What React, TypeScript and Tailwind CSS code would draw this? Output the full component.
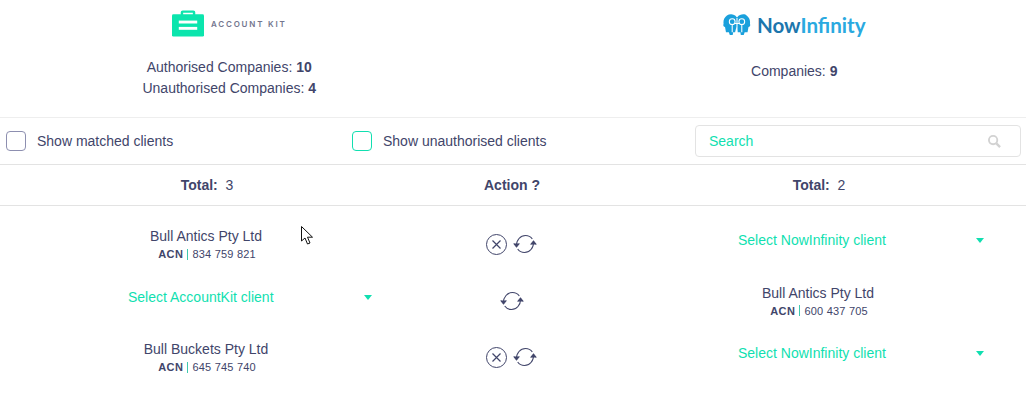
import React, { FC } from "react";

const CloseIcon: FC = () => (
  <svg width="21" height="21" viewBox="0 0 21 21" fill="none" stroke="#41456a" strokeWidth="1">
    <circle cx="10.500" cy="10.500" r="10" />
    <path d="M6.500 6.500l8 8M14.500 6.500l-8 8" strokeWidth="1.200" />
  </svg>
);

const SyncIcon: FC = () => (
  <svg width="24" height="20" viewBox="0 0 24 20" fill="none" stroke="#41456a" strokeWidth="1.100">
    <path d="M3.500 12C3.200 6 7.500 1.500 12.500 1.500c3 0 5.200 1.200 6.800 3.500" />
    <path d="M0.700 9.500l2.800 3.500 2.900-3.500" fill="#41456a" />
    <path d="M20.500 8c.3 6-4 10.500-9 10.500-3 0-5.200-1.200-6.800-3.500" />
    <path d="M23.300 10.500l-2.800-3.500-2.900 3.500" fill="#41456a" />
  </svg>
);

const Caret: FC = () => <span className="w-0 h-0 border-x-[4px] border-x-transparent border-t-[5px] border-t-[#11dfb0]" />;

const Company: FC<{ name: string; acn: string }> = ({ name, acn }) => (
  <div className="flex flex-col items-center pt-[4px]">
    <span className="text-[14px] leading-[18px]">{name}</span>
    <div className="flex items-center pl-[2px] text-[11px] leading-[18px] tracking-[0.2px]">
      <b className="tracking-[0.5px]">ACN</b>
      <span className="mx-[4px] h-[11px] border-l border-[#3fc9ae]" />
      <span>{acn}</span>
    </div>
  </div>
);

const Select: FC<{ label: string; className: string }> = ({ label, className }) => (
  <div className={`flex items-center justify-between text-[14px] text-[#11dfb0] ${className}`}>
    <span>{label}</span>
    <Caret />
  </div>
);

const Checkbox: FC<{ label: string; className: string }> = ({ label, className }) => (
  <label className="flex items-center text-[14px]">
    <span className={`w-[20px] h-[20px] rounded-[4px] border mr-[11px] ${className}`} />
    {label}
  </label>
);

const Row: FC<{ left: React.ReactNode; right: React.ReactNode; close?: boolean; className: string }> = ({ left, right, close, className }) => (
  <div className={`grid grid-cols-[412px_198px_416px] items-center ${className}`}>
    {left}
    <div className="flex items-center justify-center gap-[6px] pt-[2px] pl-[1px]">
      {close && <CloseIcon />}
      <SyncIcon />
    </div>
    {right}
  </div>
);

const App: FC = () => {
  return (
    <div className="relative w-[1026px] h-[400px] overflow-hidden bg-white text-[#41456a]" style={{ fontFamily: '"Liberation Sans", Arial, sans-serif' }}>
      {/* logos + counts */}
      <div className="flex h-[118px] border-b border-[#eeeeee]">
        <div className="w-[459px] flex flex-col items-center pt-[10px]">
          <div className="flex items-center h-[27px]">
            <svg width="32" height="27" viewBox="0 0 33 27">
              <path d="M9 5V2a2 2 0 0 1 2-2h11a2 2 0 0 1 2 2v3h-2.500V2.500h-10V5z" fill="#0be5ad" />
              <rect y="4" width="33" height="23" rx="1.500" fill="#0be5ad" />
              <rect x="7" y="10.500" width="19" height="3" fill="#fff" />
              <rect x="7" y="17" width="19" height="3" fill="#fff" />
            </svg>
            <span className="ml-[7px] text-[8px] tracking-[1.8px] font-semibold text-[#73768e]" style={{ fontFamily: "Inter, sans-serif" }}>ACCOUNT KIT</span>
          </div>
          <p className="mt-[20px] text-[14px] leading-[21px] text-center">
            Authorised Companies: <b>10</b>
            <br />
            Unauthorised Companies: <b>4</b>
          </p>
        </div>
        <div className="ml-[104px] w-[464px] flex flex-col items-center pt-[11px]">
          <div className="flex items-center h-[28px]">
            <svg width="28" height="23" viewBox="0 0 29 24">
              <path d="M14 3C12 0 7 -0.500 4 1.500 1 3.500 0 7 .5 10 0 12 0 13 2 13.500L3 19h3l1 3h3l.5-3h2L14 13l1 6h3l.5 3h3l1-3h3l1-5.500c2-.5 2-1.500 1.500-3.500.5-3-.5-6.500-3.500-8.500C23 -0.500 17 0 15 3z" fill="#1aa0dc" />
              <g fill="none" stroke="#fff" strokeWidth="1.100">
                <circle cx="9.500" cy="8" r="3" />
                <circle cx="19.500" cy="8" r="3" />
                <path d="M14.500 4v17M9.500 11v8M19.500 11v8M12 10l5 0" />
              </g>
            </svg>
            <span className="ml-[6px] text-[20.6px] font-bold text-[#1c76ad] leading-none" style={{ fontFamily: "Lato, sans-serif" }}>
              Now<span className="text-[#2aa9e0]">Infinity</span>
            </span>
          </div>
          <p className="mt-[22px] text-[14px] leading-[21px]">
            Companies: <b>9</b>
          </p>
        </div>
      </div>

      {/* filters */}
      <div className="flex items-center h-[47px] border-b border-[#e3e3e3] pl-[6px]">
        <div className="w-[346px]">
          <Checkbox label="Show matched clients" className="border-[#8d8fb0]" />
        </div>
        <div className="w-[343px]">
          <Checkbox label="Show unauthorised clients" className="border-[#11dfb0]" />
        </div>
        <div className="flex items-center justify-between w-[326px] h-[32px] pl-[13px] pr-[19px] rounded-[4px] border border-[#e3e3e3] text-[14px] text-[#11dfb0]">
          Search
          <svg width="13" height="13" viewBox="0 0 14 14" fill="none" stroke="#d2d2d2" strokeWidth="2">
            <circle cx="5.500" cy="5.500" r="4.500" />
            <path d="M9 9l4 4" strokeWidth="2.500" />
          </svg>
        </div>
      </div>

      {/* column headings */}
      <div className="grid grid-cols-[412px_198px_416px] items-center h-[41px] border-b border-[#e3e3e3] text-[14px] text-center">
        <div className="pl-[2px]"><b>Total:</b>&nbsp; 3</div>
        <b className="pl-[2px]">Action ?</b>
        <div className="pl-[2px]"><b>Total:</b>&nbsp; 2</div>
      </div>

      <Row
        close
        className="h-[56px] mt-[9px]"
        left={<Company name="Bull Antics Pty Ltd" acn="834 759 821" />}
        right={<Select label="Select NowInfinity client" className="pl-[128px] pr-[42px] pb-[6px]" />}
      />
      <Row
        className="h-[57px]"
        left={<Select label="Select AccountKit client" className="pl-[128px] pr-[40px] pb-[4px]" />}
        right={<Company name="Bull Antics Pty Ltd" acn="600 437 705" />}
      />
      <Row
        close
        className="h-[56px]"
        left={<Company name="Bull Buckets Pty Ltd" acn="645 745 740" />}
        right={<Select label="Select NowInfinity client" className="pl-[128px] pr-[42px] pb-[6px]" />}
      />

      {/* mouse pointer caught in the capture */}
      <svg className="absolute left-[301px] top-[226px]" width="14" height="20" viewBox="0 0 14 20" fill="#fff" stroke="#111" strokeWidth="1">
        <path d="M.5.500v14.500l3.500-3 2.500 6 2.500-1-2.500-5.800h5z" />
      </svg>
    </div>
  );
};

export default App;
